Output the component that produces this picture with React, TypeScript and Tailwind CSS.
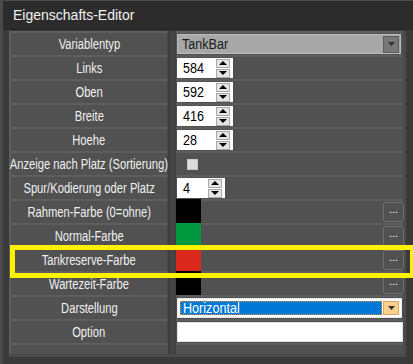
import React from "react";

type Row = {
  label: string;
  kind: "combo" | "num" | "check" | "color" | "select" | "text";
  value?: string;
  color?: string;
  narrow?: boolean;
};

const rows: Row[] = [
  { label: "Variablentyp", kind: "combo", value: "TankBar" },
  { label: "Links", kind: "num", value: "584" },
  { label: "Oben", kind: "num", value: "592" },
  { label: "Breite", kind: "num", value: "416" },
  { label: "Hoehe", kind: "num", value: "28" },
  { label: "Anzeige nach Platz (Sortierung)", kind: "check" },
  { label: "Spur/Kodierung oder Platz", kind: "num", value: "4", narrow: true },
  { label: "Rahmen-Farbe (0=ohne)", kind: "color", color: "bg-[#000000]" },
  { label: "Normal-Farbe", kind: "color", color: "bg-[#00983f]" },
  { label: "Tankreserve-Farbe", kind: "color", color: "bg-[#dc291d]" },
  { label: "Wartezeit-Farbe", kind: "color", color: "bg-[#000000]" },
  { label: "Darstellung", kind: "select", value: "Horizontal" },
  { label: "Option", kind: "text" },
];

function Spinner() {
  return (
    <div className="ml-auto mr-[3px] flex flex-col gap-[1px]">
      <div className="flex h-[9px] w-[14px] items-center justify-center border border-[#a8a8a8] bg-[#e4e4e4]">
        <svg width="8" height="4" viewBox="0 0 8 4">
          <path d="M0 4 L4 0 L8 4 Z" fill="#000" />
        </svg>
      </div>
      <div className="flex h-[9px] w-[14px] items-center justify-center border border-[#a8a8a8] bg-[#e4e4e4]">
        <svg width="8" height="4" viewBox="0 0 8 4">
          <path d="M0 0 L8 0 L4 4 Z" fill="#000" />
        </svg>
      </div>
    </div>
  );
}

function Value({ row }: { row: Row }) {
  switch (row.kind) {
    case "combo":
      return (
        <div className="ml-[1px] flex h-[20px] w-[224px] items-center border border-[#bdbdbd] bg-[#a8a8a8] pl-[4px] text-[14px] text-[#1a1a1a]">
          <span className="origin-left scale-x-[0.9]">{row.value}</span>
          <div className="ml-auto mr-[1px] flex h-[17px] w-[16px] items-center justify-center border border-[#5c5c5c] bg-[#777777]">
            <svg width="7" height="4" viewBox="0 0 7 4">
              <path d="M0 0 L7 0 L3.5 4 Z" fill="#333" />
            </svg>
          </div>
        </div>
      );
    case "num":
      return (
        <div
          className={`ml-[1px] flex h-[20px] items-center bg-white pl-[6px] text-[14px] text-black ${
            row.narrow ? "w-[48px]" : "w-[56px]"
          }`}
        >
          <span className="origin-left scale-x-[0.9]">{row.value}</span>
          <Spinner />
        </div>
      );
    case "check":
      return <div className="ml-[11px] h-[11px] w-[11px] border border-[#c8c8c8] bg-[#dcdcdc]" />;
    case "color":
      return (
        <div className="flex h-full w-full items-center">
          <div className={`-mt-[2px] h-[24px] w-[25px] ${row.color}`} />
          <div className="-mr-[1px] ml-auto flex h-[20px] w-[21px] items-center justify-center rounded-[2px] border border-[#6e6e6e] bg-[#505050] pb-[5px] text-[11px] text-white">
            ...
          </div>
        </div>
      );
    case "select":
      return (
        <div className="ml-[1px] flex h-[20px] w-[225px] items-center border border-[#e8e8e8] bg-white p-[2px]">
          <div className="flex h-full flex-1 items-center border border-dotted border-[#f08a20] bg-[#0078d7] pl-[2px] text-[14px] text-white">
            <span className="origin-left scale-x-[0.9]">{row.value}</span>
          </div>
          <div className="ml-[1px] flex h-full w-[16px] items-center justify-center border border-[#d9a860] bg-[#fcd08a]">
            <svg width="7" height="4" viewBox="0 0 7 4">
              <path d="M0 0 L7 0 L3.5 4 Z" fill="#333" />
            </svg>
          </div>
        </div>
      );
    case "text":
      return <div className="ml-[1px] h-[20px] w-[226px] border border-[#e0e0e0] bg-white" />;
  }
}

export default function App() {
  return (
    <div
      className="relative h-[364px] w-[413px] overflow-hidden border-l-[3px] border-t border-[#4a4a4a] bg-[#3a3a3a]"
      style={{ fontFamily: "'Liberation Sans', Arial, sans-serif" }}
    >
      <div className="flex h-[29px] items-center border-b border-[#262626] bg-[#2c2c2c] pl-[10px] text-[14px] text-[#f2f2f2]">
        Eigenschafts-Editor
      </div>

      <div className="ml-[6px] mt-[1px] w-[397px] border-b-[3px] border-r-[3px] border-[#4b4b4b]">
        {rows.map((row) => (
          <div key={row.label} className="flex h-[24px]">
            <div className="flex w-[159px] items-center justify-center overflow-visible whitespace-nowrap border-l-2 border-r border-t-2 border-l-[#5e5e5e] border-r-[#474747] border-t-[#5e5e5e] bg-[#515151] text-[14px] text-[#f0f0f0]">
              <span className="inline-block scale-x-[0.8]">{row.label}</span>
            </div>
            <div className="flex w-[8px] justify-center bg-[#3f3f3f]">
              <div className="w-[3px] bg-[#464646]" />
            </div>
            <div className="flex flex-1 items-center border-t-2 border-[#5e5e5e] bg-[#515151]">
              <Value row={row} />
            </div>
          </div>
        ))}
        <div className="flex h-[11px]">
          <div className="w-[159px] border-l-2 border-t-2 border-[#5e5e5e] bg-[#515151]" />
          <div className="flex w-[8px] justify-center bg-[#3f3f3f]">
            <div className="w-[3px] bg-[#464646]" />
          </div>
          <div className="flex-1 border-t-2 border-[#5e5e5e] bg-[#515151]" />
        </div>
      </div>

      <div className="absolute left-[7px] top-[244px] h-[33px] w-[405px] border-[5px] border-[#fff200]" />
    </div>
  );
}
